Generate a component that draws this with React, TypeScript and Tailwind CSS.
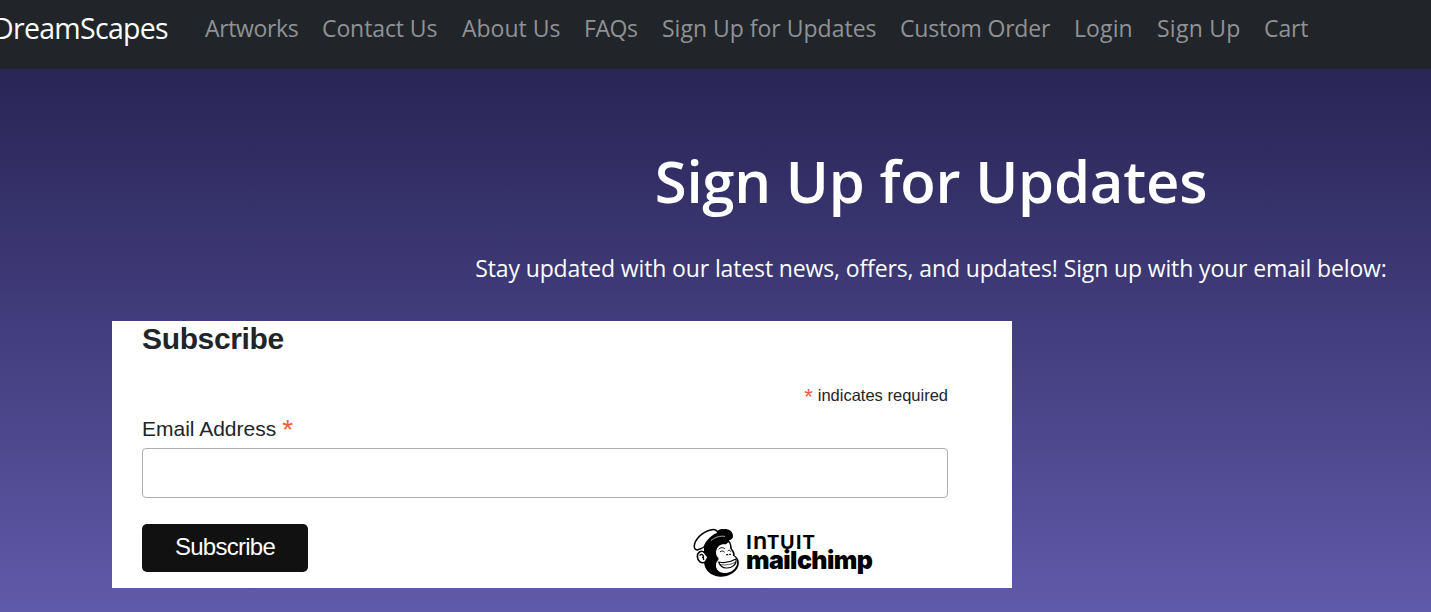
const links: { label: string; cls: string }[] = [
  { label: "Artworks", cls: "w-[93px] tracking-[-0.35px]" },
  { label: "Contact Us", cls: "w-[116px] tracking-[-0.1px]" },
  { label: "About Us", cls: "w-[98px] tracking-[0px]" },
  { label: "FAQs", cls: "w-[54px] tracking-[-0.4px]" },
  { label: "Sign Up for Updates", cls: "w-[214px] tracking-[0px]" },
  { label: "Custom Order", cls: "w-[150px] tracking-[-0.2px]" },
  { label: "Login", cls: "w-[59px] tracking-[0.1px]" },
  { label: "Sign Up", cls: "w-[83px] tracking-[0.25px]" },
  { label: "Cart", cls: "w-[44px] tracking-[-0.1px]" },
];

function Freddie() {
  return (
    <svg viewBox="0 0 156 165" className="h-[55px] w-[52px] shrink-0" aria-hidden="true">
      <path
        d="M42 64 C48 48 60 36 72 28 C78 20 86 12 98 12 C116 10 128 18 129 32 C130 40 124 44 117 46 C123 54 125 62 126 72 C132 78 135 86 134 92 C146 98 149 112 145 124 C138 144 114 156 90 155 C62 154 44 136 42 112 Z"
        fill="#000"
      />
      <path
        d="M42 66 C34 72 30 70 22 75 C13 74 11 66 14 56 C20 36 46 16 66 14 C76 13 82 18 84 25 C68 30 50 46 42 66 Z"
        fill="#fff"
        stroke="#000"
        strokeWidth="4.5"
        strokeLinejoin="round"
      />
      <path d="M64 46 C76 36 90 32 104 34" fill="none" stroke="#fff" strokeWidth="2" strokeLinecap="round" />
      <path
        d="M44 84 C36 74 22 80 22 95 C23 109 34 117 46 111 L54 96 Z"
        fill="#fff"
        stroke="#000"
        strokeWidth="4.5"
      />
      <path d="M29 92 C33 85 42 89 40 98 L36 97 M40 98 L41 105" fill="none" stroke="#000" strokeWidth="4" />
      <path
        d="M84 66 C92 56 102 58 108 58 C112 55 114 51 117 53 C120 58 120 64 121 72 C126 78 130 84 129 92 C142 98 143 112 140 121 C133 139 114 146 100 144 C84 142 77 132 78 118 C79 108 88 106 85 98 C76 92 76 76 84 66 Z"
        fill="#fff"
      />
      <path
        d="M87 72 C92 66 100 67 104 71 M91 80 C96 76 100 78 103 81 M114 77 C117 74 120 76 122 79"
        fill="none"
        stroke="#000"
        strokeWidth="3"
        strokeLinecap="round"
      />
      <path d="M110 89 h3 M119 88 h2" stroke="#000" strokeWidth="4" strokeLinecap="round" />
      <path
        d="M86 111 C104 115 124 110 138 102 C141 118 126 130 108 129 C97 129 90 122 86 111 Z"
        fill="#fff"
        stroke="#000"
        strokeWidth="3.5"
        strokeLinejoin="round"
      />
      <path d="M90 119 C108 122 126 118 137 111" fill="none" stroke="#000" strokeWidth="2" />
    </svg>
  );
}

export default function App() {
  return (
    <div className="flex h-[612px] w-full flex-col overflow-hidden bg-[#29264f] font-['Open_Sans','Noto_Sans',sans-serif]">
      <nav className="flex h-[69px] shrink-0 items-start bg-[#212529] whitespace-nowrap">
        <a className="-ml-[7px] w-[212px] pt-[8px] text-[28.5px] leading-[40px] tracking-[-0.7px] text-white">DreamScapes</a>
        <div className="flex gap-6 pt-[10px] text-[23px] leading-[36px] text-[#909294]">
          {links.map((l) => (
            <a key={l.label} className={l.cls}>
              {l.label}
            </a>
          ))}
        </div>
      </nav>
      <main className="flex flex-1 flex-col bg-linear-to-b from-[#292556] to-[#605aaa] pl-[112px]">
        <header className="flex w-[1638px] flex-col items-center text-white whitespace-nowrap">
          <h1 className="mt-[72px] text-[58px] leading-[80px] font-semibold tracking-[-0.2px]">Sign Up for Updates</h1>
          <p className="mt-[29px] text-[23px] leading-[36px] tracking-[-0.13px]">
            Stay updated with our latest news, offers, and updates! Sign up with your email below:
          </p>
        </header>
        <form className="mt-[35px] flex h-[267px] w-[900px] flex-col bg-white pr-[64px] pl-[30px] font-['Liberation_Sans',Arial,sans-serif] text-[#212529]">
          <h2 className="text-[30px] leading-[36px] font-bold tracking-[-0.35px]">Subscribe</h2>
          <div className="mt-[27px] flex items-start justify-end gap-[5px] text-[16.5px] leading-[22px]">
            <span className="pt-[2px] text-[22px] text-[#e85c41]">*</span>
            <span>indicates required</span>
          </div>
          <label className="mt-[9px] flex h-[24px] items-start gap-[6px] text-[21px] leading-[24px]">
            Email Address <span className="text-[28px] leading-[26px] text-[#e85c41]">*</span>
          </label>
          <input className="mt-[7px] h-[50px] w-[806px] rounded-[4px] border border-[#abb0b2] bg-white" />
          <div className="mt-[26px] flex h-[56px] items-start">
            <button type="button" className="h-[48px] w-[166px] rounded-[5px] bg-[#111111] pb-[2px] text-[24px] tracking-[-0.75px] text-white">
              Subscribe
            </button>
            <div className="mt-[1px] ml-[382px] flex text-black">
              <Freddie />
              <div className="ml-[4px] flex flex-col font-['Lato',sans-serif] whitespace-nowrap">
                <span className="mt-[3px] flex h-[22px] items-baseline text-[19.5px] leading-[22px] font-black tracking-[1.1px]">
                  I<span className="text-[25px] leading-[22px] font-bold tracking-[0px]">n</span>TUIT
                </span>
                <span className="-mt-[3px] font-['Inter',sans-serif] text-[25px] leading-[26px] font-black tracking-[-0.6px]">mailchimp</span>
              </div>
            </div>
          </div>
        </form>
      </main>
    </div>
  );
}
